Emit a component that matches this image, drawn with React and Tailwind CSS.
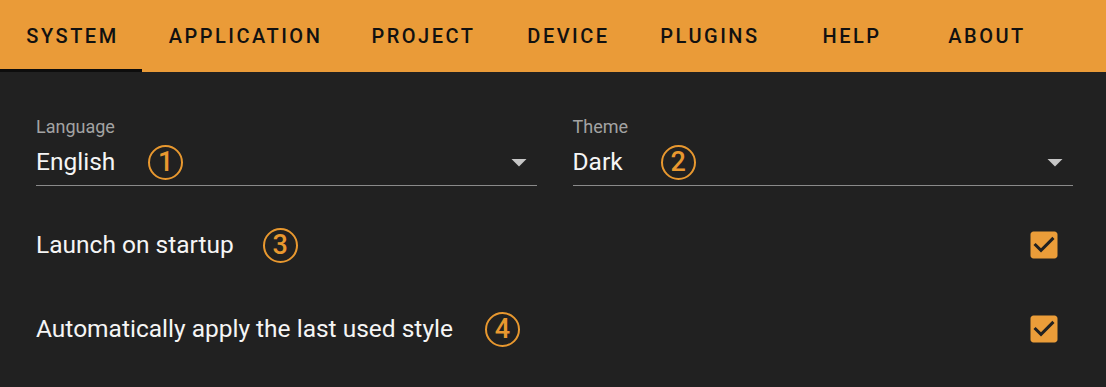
import { useState } from "react";

const tabs = [
  { label: "SYSTEM", width: "w-[143px]" },
  { label: "APPLICATION", width: "w-[203px]" },
  { label: "PROJECT", width: "w-[153px]" },
  { label: "DEVICE", width: "w-[137px]" },
  { label: "PLUGINS", width: "w-[146px]" },
  { label: "HELP", width: "w-[138px]" },
  { label: "ABOUT", width: "w-[132px]" },
];

function Marker({ n, className = "" }) {
  return (
    <span
      className={`flex h-[35px] w-[35px] shrink-0 items-center justify-center rounded-full border-2 border-[#e8982f] text-[27px] font-medium leading-none text-[#e8982f] ${className}`}
    >
      {n}
    </span>
  );
}

function ArrowDown() {
  return (
    <svg viewBox="0 0 24 24" className="h-9 w-9 shrink-0 fill-[#c6c6c6]">
      <path d="M7 10l5 5 5-5z" />
    </svg>
  );
}

function CheckIcon() {
  return (
    <svg viewBox="0 0 24 24" className="h-9 w-9 fill-[#eb9d39]">
      <path d="M19 3H5c-1.11 0-2 .9-2 2v14c0 1.1.89 2 2 2h14c1.11 0 2-.9 2-2V5c0-1.1-.89-2-2-2zm-9 14l-5-5 1.41-1.41L10 14.17l7.59-7.59L19 8l-9 9z" />
    </svg>
  );
}

function SelectField({ label, value, marker, markerGap }) {
  return (
    <div className="flex flex-col">
      <p className="text-[18px] leading-[21px] text-[#a3a3a3]">{label}</p>
      <div className="mt-[9px] flex h-[32px] items-center border-b border-[#8a8a8a] pb-[7px] box-content">
        <span className="text-[24.5px] leading-[32px] text-[#f5f5f5]">{value}</span>
        <Marker n={marker} className={markerGap} />
        <div className="flex-1" />
        <ArrowDown />
      </div>
    </div>
  );
}

function CheckRow({ label, marker, markerGap, checked }) {
  return (
    <div className="flex h-[84px] items-center">
      <span className="text-[24.5px] leading-[32px] text-[#f5f5f5]">{label}</span>
      <Marker n={marker} className={markerGap} />
      <div className="flex-1" />
      <div className="mr-[11px]">{checked && <CheckIcon />}</div>
    </div>
  );
}

export default function App() {
  const [active, setActive] = useState(0);

  return (
    <div className="h-[387px] w-[1106px] overflow-hidden bg-[#212121] font-['Roboto',sans-serif]">
      <div className="flex h-[72px] bg-[#ea9b38]">
        {tabs.map((tab, i) => (
          <button
            key={tab.label}
            onClick={() => setActive(i)}
            className={`relative flex items-center justify-center pl-[2px] text-[20px] font-medium tracking-[2.5px] text-[#111] ${tab.width}`}
          >
            {tab.label}
            {active === i && <span className="absolute bottom-0 left-0 h-[3px] w-[142px] bg-[#0d0d0d]" />}
          </button>
        ))}
      </div>

      <div className="pl-9 pr-[33px] pt-[44px]">
        <div className="grid grid-cols-2 gap-9">
          <SelectField label="Language" value="English" marker="1" markerGap="ml-[33px]" />
          <SelectField label="Theme" value="Dark" marker="2" markerGap="ml-[38px]" />
        </div>

        <div className="mt-[17px]">
          <CheckRow label="Launch on startup" marker="3" markerGap="ml-[29px]" checked />
          <CheckRow label="Automatically apply the last used style" marker="4" markerGap="ml-[32px]" checked />
        </div>
      </div>
    </div>
  );
}
